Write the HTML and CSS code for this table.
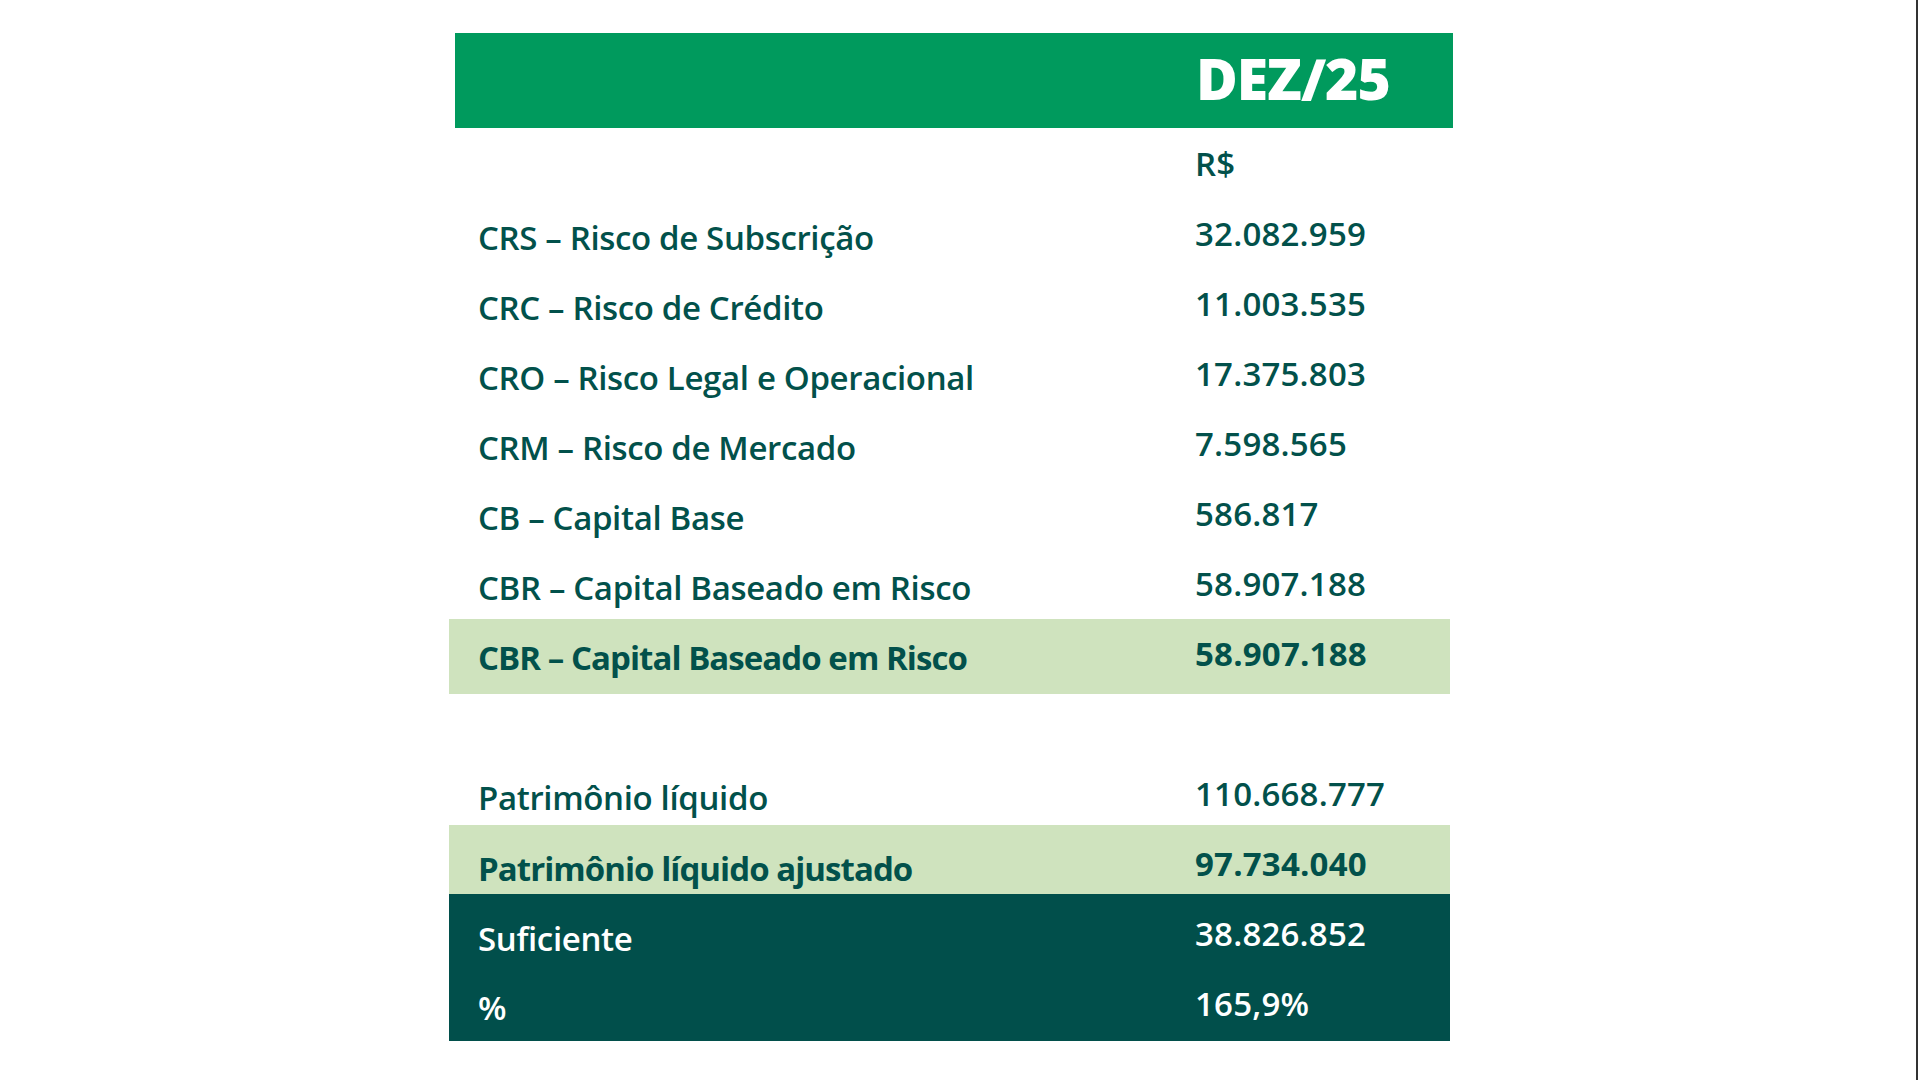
FILE: index.html
```html
<!DOCTYPE html>
<html lang="pt-BR">
<head>
<meta charset="utf-8">
<title>CBR DEZ/25</title>
<link rel="stylesheet" href="styles.css">
</head>
<body>
<div class="page">
  <div class="sheet">
    <div class="header"><span class="period">DEZ/25</span></div>
    <div class="row unit-row">
      <div class="label"></div>
      <div class="value">R$</div>
    </div>
    <div class="row">
      <div class="label">CRS – Risco de Subscrição</div>
      <div class="value">32.082.959</div>
    </div>
    <div class="row">
      <div class="label">CRC – Risco de Crédito</div>
      <div class="value">11.003.535</div>
    </div>
    <div class="row">
      <div class="label">CRO – Risco Legal e Operacional</div>
      <div class="value">17.375.803</div>
    </div>
    <div class="row">
      <div class="label">CRM – Risco de Mercado</div>
      <div class="value">7.598.565</div>
    </div>
    <div class="row">
      <div class="label">CB – Capital Base</div>
      <div class="value">586.817</div>
    </div>
    <div class="row">
      <div class="label">CBR – Capital Baseado em Risco</div>
      <div class="value">58.907.188</div>
    </div>
    <div class="row highlight tall">
      <div class="label">CBR – Capital Baseado em Risco</div>
      <div class="value">58.907.188</div>
    </div>
    <div class="spacer"></div>
    <div class="row lower">
      <div class="label">Patrimônio líquido</div>
      <div class="value">110.668.777</div>
    </div>
    <div class="row lower highlight short">
      <div class="label">Patrimônio líquido ajustado</div>
      <div class="value">97.734.040</div>
    </div>
    <div class="result">
      <div class="row lower">
        <div class="label">Suficiente</div>
        <div class="value">38.826.852</div>
      </div>
      <div class="row lower last">
        <div class="label">%</div>
        <div class="value">165,9%</div>
      </div>
    </div>
  </div>
</div>
</body>
</html>
```

FILE: styles.css
```css
* {
  box-sizing: border-box;
}

html, body {
  margin: 0;
  padding: 0;
  background: #ffffff;
  overflow: hidden;
}

body {
  font-family: "Open Sans", "Liberation Sans", sans-serif;
  color: #02514b;
}

.page {
  width: 1918px;
  height: 1080px;
  border-right: 2px solid #333333;
}

.sheet {
  margin-left: 449px;
  width: 1001px;
  padding-top: 33px;
  display: flex;
  flex-direction: column;
}

.header {
  margin-left: 6px;
  margin-right: -3px;
  height: 95px;
  background: #009a5d;
  padding-top: 6px;
  padding-left: 741px;
}

.period {
  display: block;
  font-size: 57px;
  line-height: 78px;
  font-weight: 800;
  color: #ffffff;
  letter-spacing: -1px;
}

.row {
  display: grid;
  grid-template-columns: 746px 1fr;
  height: 70px;
  font-size: 33px;
  line-height: 40px;
  font-weight: 600;
}

.label {
  padding-left: 29px;
  padding-top: 19px;
  white-space: nowrap;
  letter-spacing: -0.35px;
}

.value {
  padding-top: 15px;
  white-space: nowrap;
  letter-spacing: 0.2px;
}

.unit-row {
  height: 71px;
}

.unit-row .value {
  padding-top: 16px;
}

.highlight {
  background: #cfe3be;
  font-weight: 700;
}

.highlight .label {
  letter-spacing: -0.95px;
}

.tall {
  height: 75px;
}

.spacer {
  height: 61px;
}

.lower .label {
  padding-top: 23px;
}

.lower .value {
  padding-top: 19px;
}

.short {
  height: 69px;
}

.short .label {
  padding-top: 24px;
}

.result {
  background: #014f4b;
  color: #ffffff;
}

.result .row .label {
  padding-top: 25px;
}

.result .row .value {
  padding-top: 20px;
}

.result .last {
  height: 77px;
}

.result .last .label {
  padding-top: 24px;
}
```
